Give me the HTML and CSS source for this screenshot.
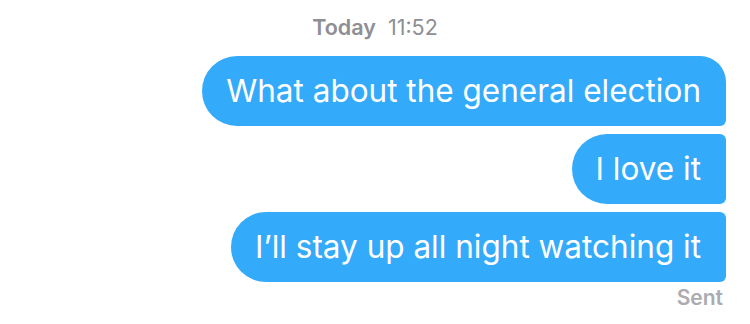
FILE: index.html
```html
<!DOCTYPE html>
<html>
<head>
<meta charset="utf-8">
<link rel="stylesheet" href="styles.css">
</head>
<body>
<div class="thread">
  <div class="stamp"><b>Today</b> 11:52</div>
  <div class="msgs">
    <div class="bubble first">What about the general election</div>
    <div class="bubble">I love it</div>
    <div class="bubble">I’ll stay up all night watching it</div>
  </div>
  <div class="status">Sent</div>
</div>
</body>
</html>
```
FILE: styles.css
```css
html, body {
  margin: 0;
  padding: 0;
  background: #ffffff;
}
.thread {
  width: 750px;
  height: 324px;
  box-sizing: border-box;
  padding: 14px 24px 0 0;
  display: flex;
  flex-direction: column;
  font-family: Inter, "Noto Sans", sans-serif;
}
.stamp {
  text-align: center;
  font-size: 21.5px;
  color: #8e8e93;
  line-height: 26px;
  margin-right: -24px;
}
.stamp b {
  font-weight: 600;
  margin-right: 6px;
}
.msgs {
  margin-top: 16px;
  display: flex;
  flex-direction: column;
  align-items: flex-end;
  gap: 8px;
}
.bubble {
  background: #33aafa;
  color: #ffffff;
  font-size: 31.5px;
  line-height: 70px;
  height: 70px;
  padding: 0 25px 0 24px;
  border-radius: 35px 6px 6px 35px;
  white-space: nowrap;
}
.bubble.first {
  border-top-right-radius: 26px;
}
.status {
  align-self: flex-end;
  margin-top: 3px;
  font-size: 21px;
  font-weight: 600;
  color: #ababb0;
  margin-right: 3px;
}
```
